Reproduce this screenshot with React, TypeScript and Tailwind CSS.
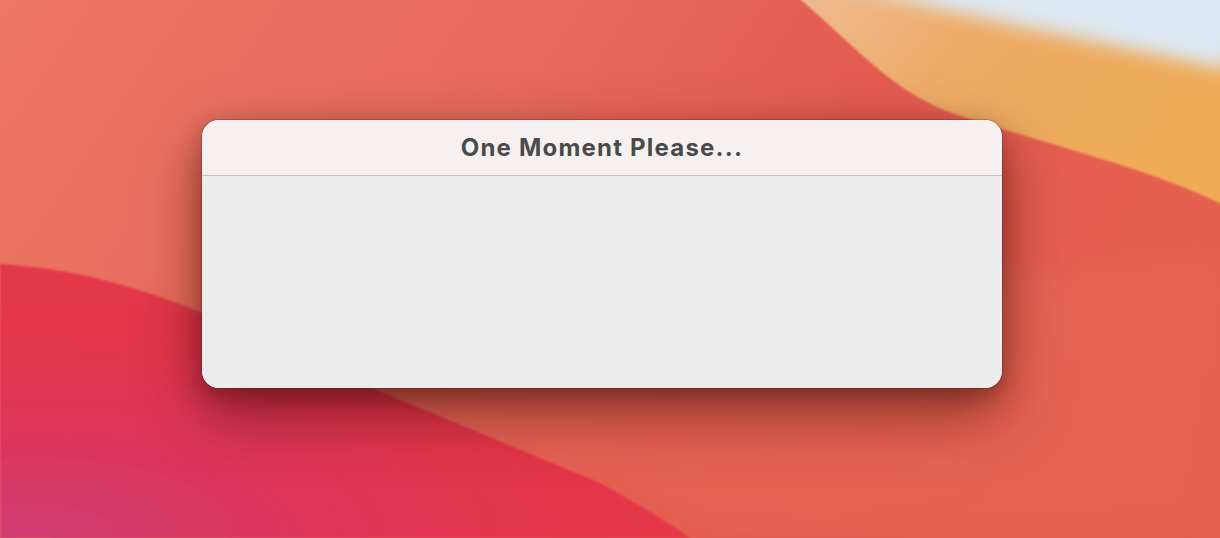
import React from 'react';

const Wallpaper: React.FC = () => (
  <svg className="absolute inset-0 h-full w-full" viewBox="0 0 1220 538" preserveAspectRatio="none">
    <defs>
      <linearGradient id="base" x1="0" y1="0" x2="1" y2="0.3">
        <stop offset="0" stopColor="#ec7762" />
        <stop offset="0.45" stopColor="#e6695a" />
        <stop offset="0.7" stopColor="#e45b50" />
        <stop offset="1" stopColor="#e6604f" />
      </linearGradient>
      <linearGradient id="lower" x1="0" y1="0" x2="1" y2="1">
        <stop offset="0" stopColor="#ec6a5a" />
        <stop offset="1" stopColor="#e5644f" />
      </linearGradient>
      <radialGradient id="red" cx="0.05" cy="1" r="1.1">
        <stop offset="0" stopColor="#cf3c73" />
        <stop offset="0.35" stopColor="#de355a" />
        <stop offset="0.7" stopColor="#e4364a" />
        <stop offset="1" stopColor="#e4394a" />
      </radialGradient>
      <linearGradient id="orange" x1="0" y1="0" x2="1" y2="0.4">
        <stop offset="0" stopColor="#f0bb92" />
        <stop offset="0.4" stopColor="#eeac68" />
        <stop offset="1" stopColor="#efab56" />
      </linearGradient>
      <filter id="soft" x="-10%" y="-10%" width="120%" height="120%">
        <feGaussianBlur stdDeviation="1.2" />
      </filter>
      <filter id="haze" x="-20%" y="-50%" width="140%" height="200%">
        <feGaussianBlur stdDeviation="9" />
      </filter>
      <filter id="wide" x="-20%" y="-20%" width="140%" height="140%">
        <feGaussianBlur stdDeviation="14" />
      </filter>
    </defs>
    <rect width="1220" height="538" fill="url(#base)" />
    <path d="M300,360 L600,483 Q650,510 700,538 L1220,538 L1220,260 L700,300 Z" fill="url(#lower)" filter="url(#wide)" opacity="0.6" />
    <path d="M0,264 C100,270 190,302 300,358 L600,483 Q650,510 690,538 L0,538 Z" fill="url(#red)" filter="url(#soft)" />
    <path d="M795,-5 C850,40 890,92 955,114 C1050,146 1150,168 1225,206 L1225,-5 Z" fill="url(#orange)" filter="url(#soft)" />
    <path d="M830,-20 C930,10 1080,38 1230,70 L1230,-20 Z" fill="#dde8f1" filter="url(#haze)" />
    <path d="M1000,-20 C1080,10 1150,30 1230,52 L1230,-20 Z" fill="#dbe8f2" filter="url(#haze)" />
  </svg>
);

export default function App() {
  return (
    <div className="relative h-[538px] w-[1220px] overflow-hidden">
      <Wallpaper />
      <div className="relative pl-[202px] pt-[120px]">
        <div className="flex h-[268px] w-[800px] flex-col overflow-hidden rounded-[17px] bg-[#ececec] shadow-[0_0_0_1px_rgba(80,20,20,0.25),0_24px_60px_rgba(40,0,0,0.5),0_8px_20px_rgba(40,0,0,0.25)]">
          <div className="flex h-[56px] items-center justify-center border-b border-[#c5c2c2] bg-[#f6f1f0]">
            <span className="font-['Inter','Liberation_Sans',sans-serif] text-[24px] font-bold tracking-[1.2px] text-[#4a4a4a]">
              One Moment Please...
            </span>
          </div>
          <div className="flex-1 bg-[#ececec]" />
        </div>
      </div>
    </div>
  );
}
